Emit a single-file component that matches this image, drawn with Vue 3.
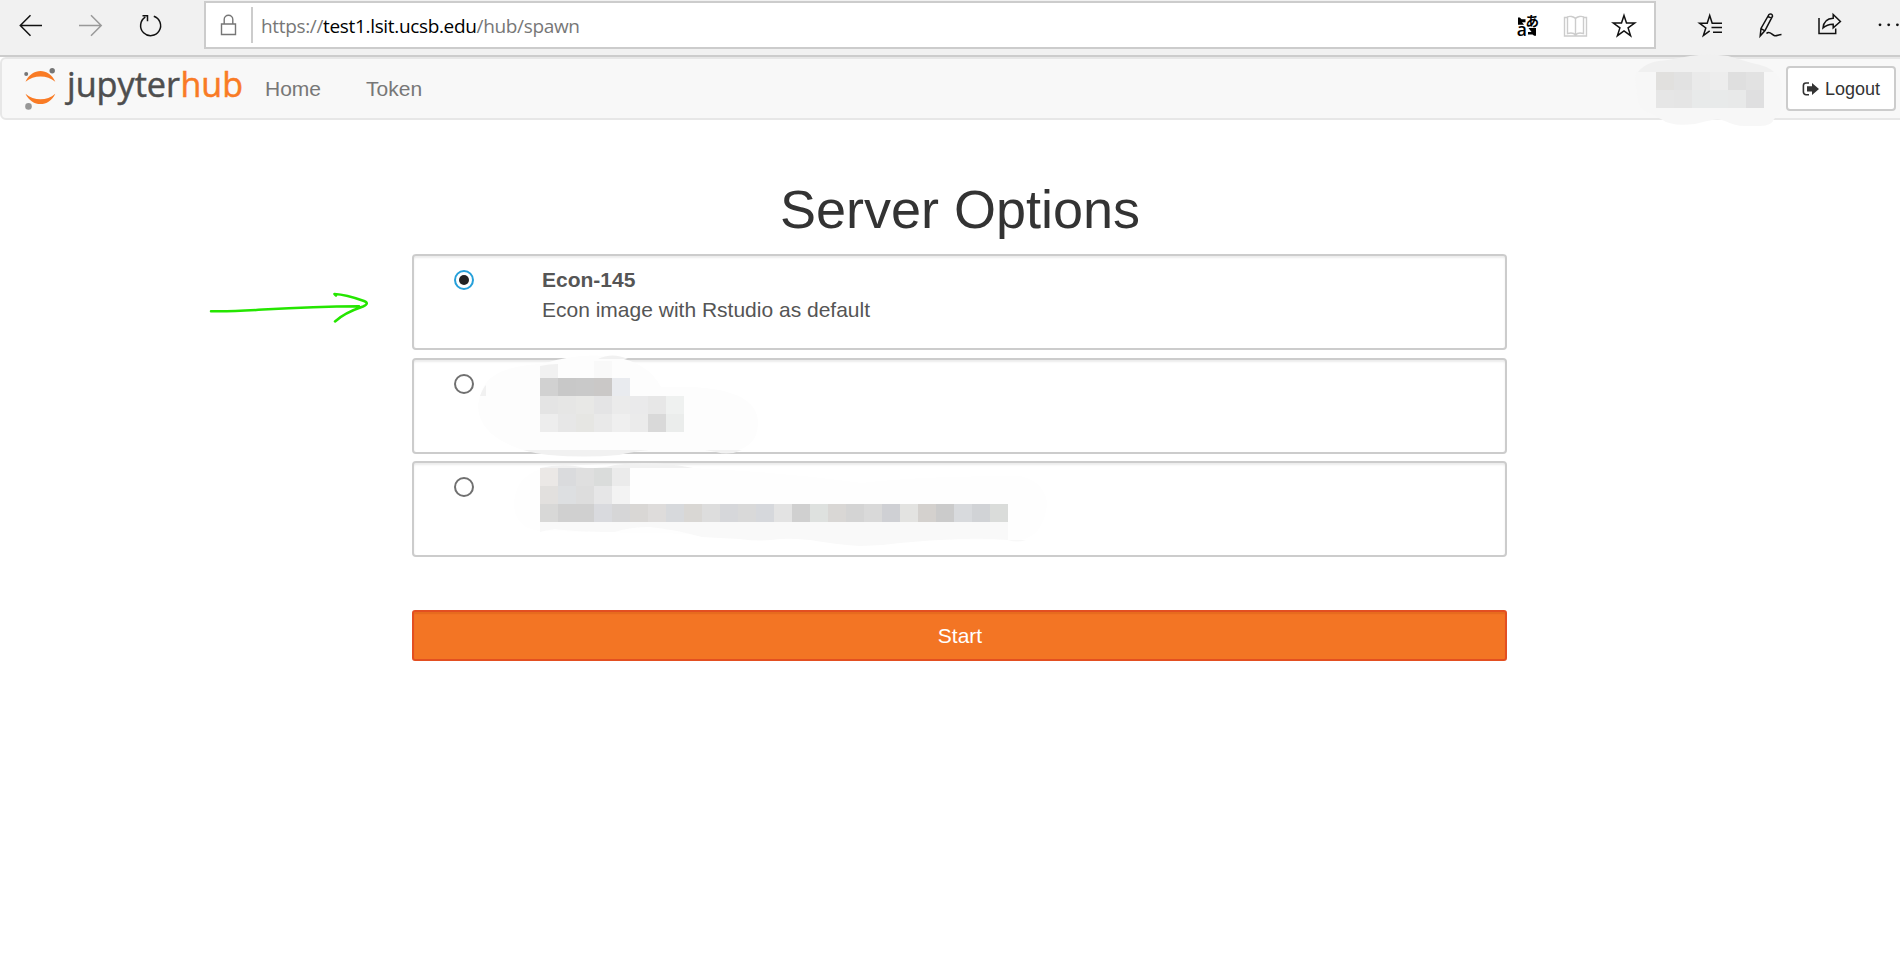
<script setup>
import { ref } from 'vue'

const CELL = 18
const selected = ref(0)
const profiles = [
  { name: 'Econ-145', description: 'Econ image with Rstudio as default' },
  { name: '', description: '' },
  { name: '', description: '' },
]

const mosaics = [
  { x: 1656, y: 72, c: ['#e1e0de', '#e2e2e2', '#eaeaea', '#ededed', '#dfdfdf', '#e2e2e2'] },
  { x: 1656, y: 90, c: ['#e6e6e6', '#e5e5e5', '#e8eaea', '#e8eaea', '#e8e9e9', '#dfdfe0'] },
  { x: 540, y: 378, c: ['#d1d1d1', '#c8c8c8', '#c9c9c9', '#cac8c7', '#e9ebef'] },
  { x: 540, y: 396, c: ['#e4e4e4', '#e6e6e5', '#e8e8e6', '#e4e4e5', '#ebebeb', '#eaeaeb', '#e7e7e7', '#eff1f0'] },
  { x: 540, y: 414, c: ['#ededed', '#e7e7e7', '#e6e6e3', '#e9e9e9', '#efefef', '#ebebeb', '#d9d9d9', '#ebedec'] },
  { x: 540, y: 468, c: ['#ebe8e6', '#dadbdd', '#dfdfdf', '#dadcdb', '#ebebeb'] },
  { x: 540, y: 486, c: ['#e2e0de', '#dddfe1', '#dddddd', '#e6e6e7', '#f3f3f3'] },
  {
    x: 540,
    y: 504,
    c: ['#d8d8d7', '#d0d0d0', '#d0d0d0', '#d9dade', '#d6d6d7', '#d9d7d5', '#dedcdb', '#d7d9dc', '#d9d7d4',
      '#dddddd', '#d6d7da', '#d9d9d9', '#d6d8dc', '#e3e3e3', '#d0d0d0', '#dee1df', '#d9d7d5', '#d4d4d4',
      '#d9d9d9', '#cfd0d4', '#e3e3e1', '#d4d1ce', '#cbcbcb', '#d8dadd', '#d1d3d6', '#dadcda'],
  },
]
</script>

<template>
  <div class="window">
    <header class="chrome">
      <svg class="ic back" width="28" height="55" viewBox="18 0 28 55"><path d="M42 25.5H20.5M30.5 15.3 20.3 25.5l10.2 10.2" /></svg>
      <svg class="ic fwd" width="28" height="55" viewBox="77 0 28 55"><path d="M79 25.5h22.300M91 15.300l10.200 10.200L91 35.700" /></svg>
      <svg class="ic" width="28" height="55" viewBox="136 0 28 55"><path d="M153.800 16.200A10 10 0 1 1 145.300 17.200M142.500 15.700h5v5.500" /></svg>
      <div class="address">
        <svg class="lock" width="24" height="44" viewBox="217 3 24 44"><path d="M221.500 24h14v10.500h-14zM224.200 24v-4.500a4.300 4.300 0 0 1 8.600 0V24" /></svg>
        <span class="divider"></span>
        <span class="url">https://<b>test1.lsit.ucsb.edu</b>/hub/spawn</span>
        <svg class="translate" width="24" height="44" viewBox="1516 3 24 44">
          <text x="1516.800" y="35.500" font-size="17.500" font-family="Open Sans, sans-serif" font-weight="600">a</text>
          <text x="1525.500" y="25.500" font-size="13.500" font-family="Noto Sans CJK JP, sans-serif" font-weight="700">あ</text>
          <path d="M1518 17.500h1.800l1.700 1.700h4v3h-3.500l2 2.500h-6zM1528.500 28h7.500v7.800h-1.800l-1.700-1.300h-4.500v-2.500h3.500z" />
        </svg>
        <svg class="book" width="26" height="44" viewBox="1563 3 26 44"><path d="M1567.500 17.500h-3v18.500h22v-18.500h-3M1575.500 18.500c-2-2.300-6-2.500-8-1.700v16.700c3-.8 6.500-.5 8 1.500 1.500-2 5-2.300 8-1.500V16.800c-2-.8-6-.6-8 1.700v17" /></svg>
        <svg class="ic" width="26" height="44" viewBox="1611 3 26 44"><path d="m1624 15.500 2.500 7.600h8.200l-6.600 4.800 2.500 7.800-6.600-4.800-6.600 4.800 2.500-7.800-6.600-4.800h8.200z" /></svg>
      </div>
      <div class="tools">
        <svg class="ic" width="28" height="55" viewBox="1697 0 28 55"><path d="M1715 23.200h-2.800l-2.500-7.700-2.500 7.700h-7.700l6.300 4.800-2.400 7.500 6.300-4.700M1713 23.200h9M1711.500 27.500h10.500M1713 32.200h9" /></svg>
        <svg class="ic" width="28" height="55" viewBox="1757 0 28 55"><path d="m1760.200 36 .8-7.500 8-14c1.500-1.200 3.700-.2 3.500 1.700l-7.500 14.300zM1768 16.300l3.700 2M1761 28.700l3.500 1.900M1766.500 33.500c3-3.500 5.500 1.500 8.300 2.300 2 .3 3.500-1 6.700-1.300" /></svg>
        <svg class="ic" width="28" height="55" viewBox="1817 0 28 55"><path d="M1819 18v15.500h16.700v-5M1823 28c.5-6 4-9.500 10.200-9.800v-3.700l7.200 7-7.200 6.300v-3.600c-4.200-.2-7 1-10.200 3.800z" /></svg>
        <svg class="dots" width="22" height="55" viewBox="1878 0 22 55"><circle cx="1881" cy="24.800" r="1.400" /><circle cx="1889.700" cy="24.800" r="1.400" /><circle cx="1898.400" cy="24.800" r="1.400" /></svg>
      </div>
    </header>

    <nav class="navbar">
      <svg class="logo" width="226" height="59" viewBox="20 59 226 59">
        <g fill="#f97b25">
          <path d="M25.500 81.800C32 67.500 49 67.500 55.300 81.800 47 74.700 34 74.700 25.500 81.800z" />
          <path d="M25.500 93.700C32 107.500 49 107.500 55.300 93.700 47 101.200 34 101.200 25.500 93.700z" />
        </g>
        <circle cx="52.200" cy="70.700" r="2.700" fill="#767676" />
        <circle cx="26.200" cy="74" r="2" fill="#767676" />
        <circle cx="28.500" cy="106.400" r="3.300" fill="#979797" />
        <text x="67" y="97" fill="#4e4e4e" stroke="#4e4e4e" stroke-width=".5" textLength="113" lengthAdjust="spacingAndGlyphs">jupyter</text>
        <text x="180.500" y="97" fill="#f97b25" stroke="#f97b25" stroke-width=".5" textLength="62.500" lengthAdjust="spacingAndGlyphs">hub</text>
      </svg>
      <a class="link home">Home</a>
      <a class="link token">Token</a>
      <button class="logout">
        <svg width="18" height="16" viewBox="0 0 18 16">
          <path d="M7 2H4a2.600 2.600 0 0 0-2.600 2.600v6.500A2.600 2.600 0 0 0 4 13.700h3" fill="none" stroke="#333" stroke-width="1.600" />
          <path d="M5 5.300h5V2l7 6-7 6v-3.500H5z" fill="#333" />
        </svg>
        <span class="logout-text">Logout</span>
      </button>
    </nav>

    <main class="content">
      <h1>Server Options</h1>
      <div class="profiles">
        <label v-for="(p, i) in profiles" :key="i" class="profile">
          <span class="radio" :class="{ on: selected === i }" @click="selected = i"></span>
          <span class="info">
            <strong>{{ p.name }}</strong>
            <span>{{ p.description }}</span>
          </span>
        </label>
      </div>
      <button class="start">Start</button>
    </main>

    <svg class="marks" width="1900" height="961" viewBox="0 0 1900 961">
      <path fill="#f7f7f7" d="M1640 72h134q8 6 8 18v18q-3 8-8 11-2 7-14 7h-15q-10 0-20-5-6-3-18 0l-12 3q-24 3-34-5-15-7-21-11-6-22-4-36z" />
      <path fill="#f0f0f0" d="M1638 72C1645 63 1655 61 1668 60L1690 56Q1708 53 1728 56L1752 63Q1768 66 1774 72z" />
      <path fill="#fdfdfd" d="M480 396Q486 366 542 364Q585 350 624 359Q650 366 661 387Q758 383 758 423Q758 449 728 452H530Q478 438 478 405z" />
      <path fill="#f1f1f1" d="M540 366q9-2 18-2v14h-18zM480 396q3-8 6-11v11zM598 359q14-7 30 0zM523 450h126q-18 2-30 5-35 3-70 0-12-1-26-5zM705 450h37q-13 6-26 2z" />
      <path fill="#f9f9f9" d="M594 361h18v17h-18z" />
      <path fill="#fefefe" d="M514 503Q516 472 550 467Q620 461 692 468Q780 472 862 483Q920 476 1020 476Q1046 482 1047 505Q1043 537 1020 540L860 540L700 534L540 531Q514 528 514 503z" />
      <path fill="#f1f1f1" d="M540 468q18-4 35-2 20 5 40-1 37-5 78 3z" />
      <path fill="#f9f9f9" d="M540 522h468v18q-22-2-48-1-30 1-60 4-20 3-40 3-20-1-50-6-20-2-30-1-20 3-40 0-22-1-38-2-30-8-52-10-20 0-35 5-40 0-60-3-12 2-15 3z" />
      <path fill="#f8f8f8" d="M1008 540h18q-9 3-18 0z" />
      <template v-for="row in mosaics" :key="row.x + '-' + row.y">
        <rect v-for="(color, n) in row.c" :key="n" :x="row.x + n * CELL" :y="row.y" width="18" height="18" :fill="color" shape-rendering="crispEdges" />
      </template>
      <g fill="none" stroke="#25e600" stroke-width="2.500" stroke-linecap="round" stroke-linejoin="round">
        <path d="M211 311.200C247 312.500 278 306.500 359 306.300M336 295.500L334.500 294Q346 294.500 364 301Q370 303.500 363 306.500Q344 313 335 321.500" />
      </g>
    </svg>
  </div>
</template>

<style>
html, body { margin: 0; overflow: hidden; background: #fff; }
</style>

<style scoped>
.window { position: relative; width: 1900px; height: 961px; overflow: hidden; background: #fff; font-family: "Liberation Sans", Arial, sans-serif; }
.window * { box-sizing: border-box; }
svg { display: block; flex: none; }
.chrome { display: flex; height: 57px; padding-left: 18px; background: #f1f1f1; border-bottom: 2px solid #ccc; }
.ic { fill: none; stroke: #111; stroke-width: 1.5; }
.back, .fwd { margin-right: 31px; }
.fwd { stroke: #999; }
.address { display: flex; align-items: center; width: 1452px; height: 48px; margin: 1px 0 0 40px; background: #fff; border: 2px solid #ccc; }
.lock { margin-left: 11px; fill: none; stroke: #767676; stroke-width: 1.4; }
.divider { width: 2px; height: 36px; margin-left: 10px; background: #ccc; }
.url { flex: 1; margin-left: 8px; padding-top: 2px; font-family: "Open Sans", "Noto Sans", sans-serif; font-size: 19px; letter-spacing: -.34px; color: #777; white-space: nowrap; }
.url b { font-weight: 400; color: #000; }
.translate { margin-right: 23px; }
.book { margin-right: 22px; fill: none; stroke: #ccc; stroke-width: 1.4; }
.address > .ic { margin-right: 17px; }
.tools { display: flex; gap: 32px; margin-left: 41px; }
.dots { fill: #111; }
.navbar { display: flex; width: 1910px; height: 63px; padding-left: 18px; background: #f8f8f8; border: 2px solid #e7e7e7; border-radius: 6px; }
.logo text { font: 34px "Open Sans", "Noto Sans", sans-serif; }
.link { font-size: 21px; line-height: 60px; color: #777; }
.home { margin-left: 19px; }
.token { margin-left: 45px; }
.logout { display: flex; align-items: center; gap: 5px; width: 110px; height: 45px; margin: 7px 12px 0 auto; padding: 0 0 0 14px; font: 18px "Liberation Sans", Arial, sans-serif; color: #333; background: #fff; border: 2px solid #ccc; border-radius: 4px; }
.logout-text { padding-top: 2px; }
.content { width: 1095px; margin: 59px 0 0 412px; }
h1 { margin: 0; padding-left: 1px; font-size: 54px; font-weight: 500; line-height: 60px; color: #333; text-align: center; }
.profiles { display: flex; flex-direction: column; gap: 7.5px; margin-top: 15px; }
.profile { display: flex; height: 96px; padding: 9px 0 0 40px; border: 2px solid #ccc; border-radius: 4px; box-shadow: inset 0 2px 2px rgba(0, 0, 0, .075); }
.radio { position: relative; width: 20px; height: 20px; margin-top: 5px; border: 2px solid #707070; border-radius: 50%; background: #fff; }
.radio.on { border-color: #26a0da; }
.radio.on::after { content: ""; position: absolute; left: 3px; top: 3px; width: 10px; height: 10px; border-radius: 50%; background: #222; }
.info { display: flex; flex-direction: column; margin-left: 68px; font-size: 21px; line-height: 30px; color: #555; }
.start { display: block; width: 1095px; height: 51px; margin-top: 53px; padding: 0 0 0 1px; font: 21px "Liberation Sans", Arial, sans-serif; color: #fff; background: #f37524; border: 2px solid #e34f21; border-radius: 3px; box-shadow: inset 0 2px 1px rgba(180, 70, 10, .2); }
.marks { position: absolute; inset: 0; pointer-events: none; }
</style>
